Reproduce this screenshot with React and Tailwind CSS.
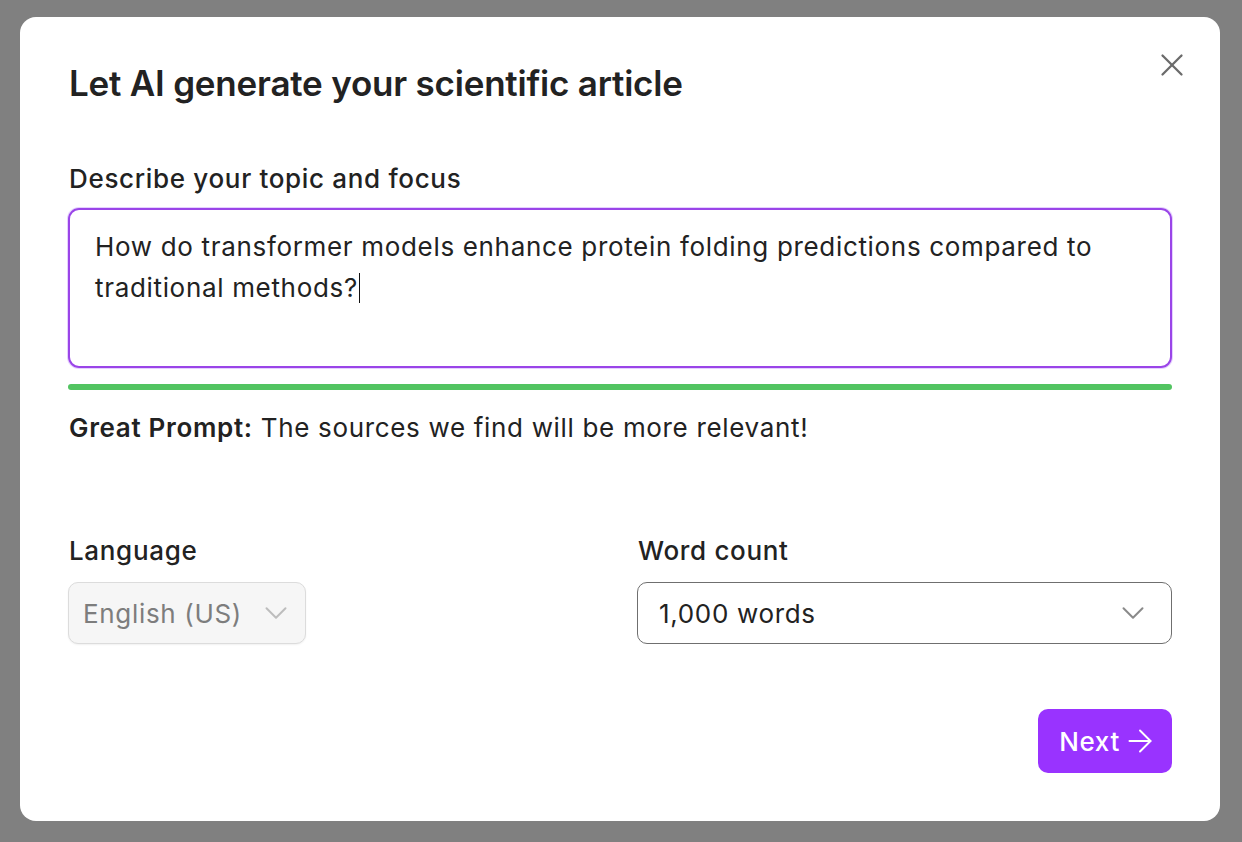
import { X, ChevronDown, ArrowRight } from 'lucide-react';

const font = { fontFamily: 'Inter, "Noto Sans", sans-serif' };

const Select = ({ value, disabled, className = '' }) => (
  <div
    className={`flex h-[62px] items-center rounded-[10px] text-[26px] ${
      disabled
        ? 'gap-[24px] border border-[#dcdcdc] bg-[#f6f6f6] pl-[14px] pr-[18px] text-[#7d7d7d] shadow-[0_1px_2px_rgba(0,0,0,0.06)]'
        : 'justify-between border-[1.5px] border-[#6f6f6f] bg-white pl-[21px] pr-[28px] text-[#222]'
    } ${className}`}
  >
    <span>{value}</span>
    <ChevronDown
      size={38}
      strokeWidth={1.25}
      className={`-mx-[9px] ${disabled ? 'text-[#bdbdbd]' : 'text-[#8a8a8a]'}`}
    />
  </div>
);

export default function App() {
  return (
    <div className="min-h-[842px] w-full bg-[#808080] pt-[17px] pl-[20px] tracking-[0.042em]" style={font}>
      <div className="relative flex w-[1200px] h-[804px] flex-col rounded-[16px] bg-white pl-[48px] pr-[48px] pt-[45px] pb-[48px] text-[#222]">
        <button className="absolute right-[29px] top-[29px] text-[#6b6b6b]">
          <X size={38} strokeWidth={1.45} className="block" />
        </button>

        <h1 className="pl-[1px] text-[35px] font-semibold leading-[42px] tracking-[-0.006em]">
          Let AI generate your scientific article
        </h1>

        <label className="mt-[59px] pl-[1px] text-[26px] font-medium leading-[32px]">
          Describe your topic and focus
        </label>

        <div className="mt-[13px] h-[160px] rounded-[11px] border-2 border-[#9a45e8] px-[25px] pt-[17px] text-[26px] leading-[40px] shadow-[0_0_0_1px_rgba(180,120,255,0.35)]">
          How do transformer models enhance protein folding predictions compared to traditional methods?
          <span className="ml-[1px] inline-block h-[30px] w-[1.5px] translate-y-[6px] bg-[#111]" />
        </div>

        <div className="mt-[16px] h-[6px] rounded-full bg-[#52c461]" />

        <p className="mt-[22px] pl-[1px] text-[26px] leading-[32px]">
          <span className="font-semibold">Great Prompt:</span> The sources we find will be more relevant!
        </p>

        <div className="mt-[91px] grid grid-cols-2 gap-x-[34px]">
          <div className="flex flex-col">
            <span className="pl-[1px] text-[26px] font-medium leading-[32px]">Language</span>
            <Select value="English (US)" disabled className="mt-[15px] w-[238px]" />
          </div>
          <div className="flex flex-col">
            <span className="pl-[1px] text-[26px] font-medium leading-[32px]">Word count</span>
            <Select value="1,000 words" className="mt-[15px]" />
          </div>
        </div>

        <div className="mt-auto flex justify-end">
          <button className="flex h-[64px] items-center gap-[2px] rounded-[10px] bg-[#9933ff] pl-[21px] pr-[14px] text-[26px] font-medium text-white">
            Next
            <ArrowRight size={36} strokeWidth={1.3} />
          </button>
        </div>
      </div>
    </div>
  );
}
